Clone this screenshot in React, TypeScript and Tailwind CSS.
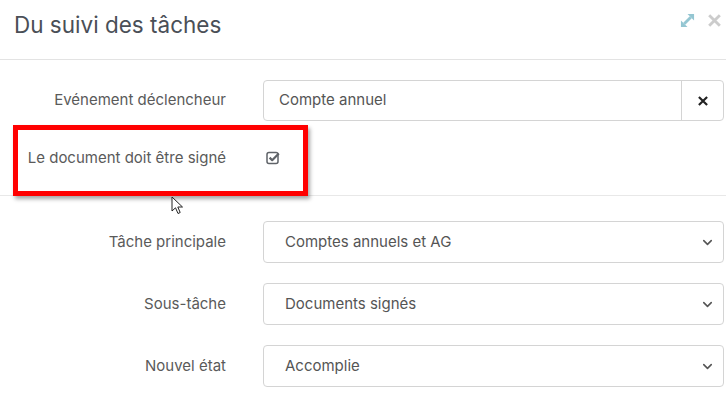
import { ChevronDown } from 'lucide-react'

const font = { fontFamily: 'Inter, "Noto Sans", sans-serif' }

function ExpandIcon() {
  return (
    <svg width="15" height="15" viewBox="0 0 16 16" fill="#94c6d2">
      <path d="M4.5 11.5 L11.5 4.5" stroke="#94c6d2" strokeWidth="3" />
      <polygon points="8,1 15,1 15,8" />
      <polygon points="1,8 1,15 8,15" />
    </svg>
  )
}

function BoldX({ size, color }: { size: number; color: string }) {
  return (
    <svg width={size} height={size} viewBox="0 0 12 12">
      <path d="M2 2 L10 10 M10 2 L2 10" stroke={color} strokeWidth="2.6" strokeLinecap="square" />
    </svg>
  )
}

function CheckSquare() {
  return (
    <svg width="14" height="14" viewBox="0 0 14 14" fill="none">
      <rect x="1" y="1.5" width="11" height="11" rx="2" stroke="#5f6368" strokeWidth="1.5" />
      <path d="M3.6 6.6 L6.2 9.2 L12.8 2.4" stroke="#5f6368" strokeWidth="2.2" strokeLinejoin="round" />
    </svg>
  )
}

function Cursor() {
  return (
    <svg width="14" height="20" viewBox="0 0 14 20" className="absolute left-[171px] top-[196px]">
      <path d="M1 1 L1 15 L4.5 11.8 L7 17.5 L9.2 16.5 L6.8 11 L11.5 11 Z" fill="#fff" stroke="#222" strokeWidth="1" strokeLinejoin="round" />
    </svg>
  )
}

function Label({ text }: { text: string }) {
  return <div className="w-[226px] shrink-0 text-right text-[15px] text-[#5a5a5a]">{text}</div>
}

function SelectRow({ label, value }: { label: string; value: string }) {
  return (
    <div className="flex items-center">
      <Label text={label} />
      <div className="ml-[37px] mr-[2px] flex h-[42px] flex-1 items-center justify-between rounded-[4px] border border-[#d4d4d4] pl-[21px] pr-[8px] text-[15px] text-[#555]">
        <span>{value}</span>
        <ChevronDown size={15} strokeWidth={2.5} color="#555" />
      </div>
    </div>
  )
}

export default function App() {
  return (
    <div className="relative h-[405px] w-[726px] overflow-hidden bg-white" style={font}>
      {/* header */}
      <div className="flex h-[60px] items-start justify-between border-b border-[#e3e3e3] pl-[14px] pr-[5px]">
        <h1 className="mt-[8px] text-[22.5px] font-normal text-[#4a4f57]">Du suivi des tâches</h1>
        <div className="mt-[13px] flex items-center gap-[13px]">
          <ExpandIcon />
          <BoldX size={13} color="#cccccc" />
        </div>
      </div>

      {/* body */}
      <div className="pt-[20px]">
        <div className="flex items-center">
          <Label text="Evénement déclencheur" />
          <div className="ml-[37px] mr-[2px] flex h-[41px] flex-1 rounded-[4px] border border-[#d4d4d4] text-[15px] text-[#555]">
            <div className="flex flex-1 items-center pl-[15px]">Compte annuel</div>
            <div className="flex w-[42px] items-center justify-center border-l border-[#d4d4d4]">
              <BoldX size={10} color="#222" />
            </div>
          </div>
        </div>

        <div className="flex h-[74px] items-center">
          <Label text="Le document doit être signé" />
          <div className="ml-[40px]">
            <CheckSquare />
          </div>
        </div>

        <div className="border-t border-[#e8e8e8]" />

        <div className="mt-[25px] flex flex-col gap-[20px]">
          <SelectRow label="Tâche principale" value="Comptes annuels et AG" />
          <SelectRow label="Sous-tâche" value="Documents signés" />
          <SelectRow label="Nouvel état" value="Accomplie" />
        </div>
      </div>

      {/* highlight annotation */}
      <div className="absolute left-[13px] top-[125px] h-[71px] w-[295px] border-[5px] border-[#ff0000] shadow-[2px_3px_4px_rgba(0,0,0,0.35)]" />
      <Cursor />
    </div>
  )
}
